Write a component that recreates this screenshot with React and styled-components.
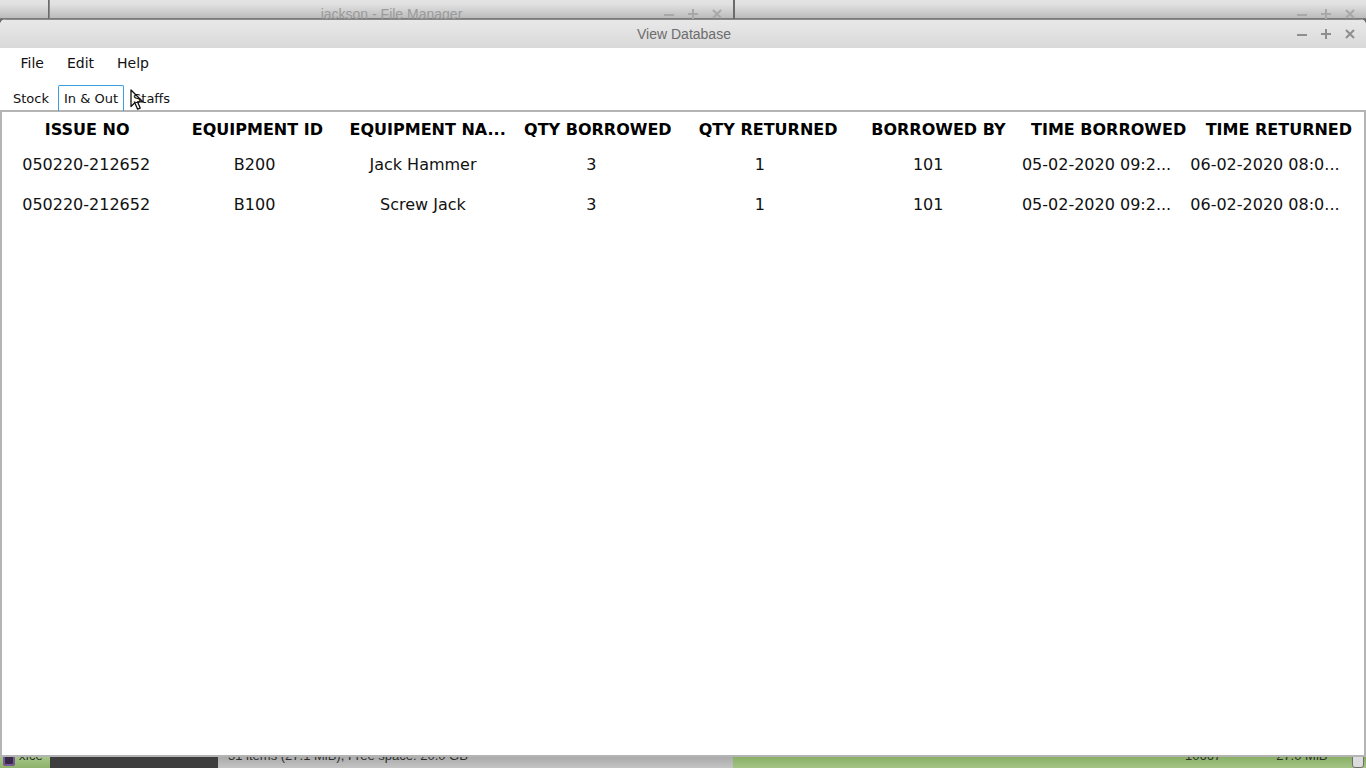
import React from "react";
import styled, { createGlobalStyle } from "styled-components";

const GlobalStyle = createGlobalStyle`
  html, body {
    margin: 0;
    padding: 0;
    overflow: hidden;
  }
  body {
    font-family: "DejaVu Sans", "Liberation Sans", sans-serif;
  }
`;

const columns = [
  "ISSUE NO",
  "EQUIPMENT ID",
  "EQUIPMENT NA...",
  "QTY BORROWED",
  "QTY RETURNED",
  "BORROWED BY",
  "TIME BORROWED",
  "TIME RETURNED",
];

const rows = [
  ["050220-212652", "B200", "Jack Hammer", "3", "1", "101", "05-02-2020 09:2...", "06-02-2020 08:0..."],
  ["050220-212652", "B100", "Screw Jack", "3", "1", "101", "05-02-2020 09:2...", "06-02-2020 08:0..."],
];

const WinButtons = ({ color }) => (
  <ButtonSet>
    <svg width="12" height="12" viewBox="0 0 12 12">
      <path d="M1 7h10" stroke={color} strokeWidth="2" />
    </svg>
    <svg width="12" height="12" viewBox="0 0 12 12">
      <path d="M1 6h10M6 1v10" stroke={color} strokeWidth="2" />
    </svg>
    <svg width="12" height="12" viewBox="0 0 12 12">
      <path d="M2 2l8 8M10 2l-8 8" stroke={color} strokeWidth="2" />
    </svg>
  </ButtonSet>
);

const App = () => {
  return (
    <>
      <GlobalStyle />
      <Desktop>
        <BackBar $left={-20} $width={68} />
        <BackBar $left={49} $width={684} $edge>
          <BackTitle>jackson - File Manager</BackTitle>
          <BackButtons>
            <WinButtons color="#a8a8a8" />
          </BackButtons>
        </BackBar>
        <BackBar $left={735} $width={631}>
          <BackButtons>
            <WinButtons color="#a8a8a8" />
          </BackButtons>
        </BackBar>

        <BottomStrip>
          <Segment $w={50} $bg="linear-gradient(#a6c889, #8cb26a)">
            <PanelIcon />
            <CutText>xfce</CutText>
          </Segment>
          <Segment $w={168} $bg="#3e3e3e" />
          <Segment $w={515} $bg="linear-gradient(#a8a8a8, #c4c4c4)">
            <CutText $pad={10}>31 items (27.1 MiB), Free space: 20.0 GB</CutText>
          </Segment>
          <Segment $grow $bg="linear-gradient(#86ad62, #a4c486)">
            <CutText $pad={452}>10667</CutText>
            <CutText $pad={55}>27.0 MiB</CutText>
            <CutText $pad={50}>0%</CutText>
            <ScrollNub />
          </Segment>
        </BottomStrip>

        <Window>
          <TitleBar>
            <Title>View Database</Title>
            <TitleButtons>
              <WinButtons color="#8e8e8e" />
            </TitleButtons>
          </TitleBar>

          <MenuBar>
            <MenuItem>File</MenuItem>
            <MenuItem>Edit</MenuItem>
            <MenuItem>Help</MenuItem>
          </MenuBar>

          <TabRow>
            <Tab>Stock</Tab>
            <Tab $active>In &amp; Out</Tab>
            <Tab>Staffs</Tab>
          </TabRow>

          <Content>
            <HeaderRow>
              {columns.map((c) => (
                <HeadCell key={c}>{c}</HeadCell>
              ))}
            </HeaderRow>
            {rows.map((row, index) => (
              <DataRow key={index}>
                {row.map((cell, i) => (
                  <Cell key={i}>{cell}</Cell>
                ))}
              </DataRow>
            ))}
          </Content>
        </Window>

        <Cursor width="14" height="22" viewBox="0 0 14 22">
          <path
            d="M1 1 L1 17.5 L4.8 13.8 L7.6 20.2 L10.2 19.1 L7.5 12.8 L12.8 12.8 Z"
            fill="#fff"
            stroke="#111"
            strokeWidth="1.3"
            strokeLinejoin="round"
          />
        </Cursor>
      </Desktop>
    </>
  );
};

const Desktop = styled.div`
  position: relative;
  width: 1366px;
  height: 768px;
  overflow: hidden;
  background: #6b6b6b;
`;

const BackBar = styled.div`
  position: absolute;
  top: -12px;
  left: ${(p) => p.$left}px;
  width: ${(p) => p.$width}px;
  height: 31px;
  border-radius: 8px 8px 0 0;
  background: linear-gradient(#ececec 0%, #e0e0e0 55%, #bcbcbc 100%);
  border-bottom: 1px solid #7c7c7c;
  box-sizing: border-box;
  ${(p) => p.$edge && "border-left: 1px solid #8a8a8a;"}
`;

const BackTitle = styled.div`
  position: absolute;
  left: 0;
  right: 0;
  top: 18px;
  text-align: center;
  font-family: "Liberation Sans", Arial, sans-serif;
  font-size: 14px;
  color: #9a9a9a;
  line-height: 16px;
`;

const BackButtons = styled.div`
  position: absolute;
  top: 20px;
  right: 10px;
`;

const ButtonSet = styled.div`
  display: flex;
  gap: 12px;
  align-items: center;
`;

const BottomStrip = styled.div`
  position: absolute;
  left: 0;
  right: 0;
  top: 756px;
  height: 12px;
  display: flex;
`;

const Segment = styled.div`
  display: flex;
  align-items: flex-start;
  overflow: hidden;
  height: 12px;
  background: ${(p) => p.$bg};
  ${(p) => (p.$grow ? "flex: 1;" : `width: ${p.$w}px;`)}
  position: relative;
`;

const CutText = styled.span`
  font-family: "Liberation Sans", Arial, sans-serif;
  font-size: 13px;
  line-height: 13px;
  color: #2e2e2e;
  margin-left: ${(p) => p.$pad || 4}px;
  margin-top: -7px;
  white-space: nowrap;
`;

const PanelIcon = styled.div`
  width: 12px;
  height: 12px;
  margin: -2px 0 0 3px;
  border-radius: 3px;
  background: #3a2a4a;
  box-shadow: inset 0 0 0 2px #7b5a9b;
  flex-shrink: 0;
`;

const ScrollNub = styled.div`
  position: absolute;
  right: 2px;
  top: -4px;
  width: 10px;
  height: 14px;
  border: 1px solid #6e6e6e;
  border-radius: 3px;
  background: #dcdcdc;
`;

const Window = styled.div`
  position: absolute;
  left: 0;
  top: 19px;
  width: 1366px;
  height: 738px;
  display: flex;
  flex-direction: column;
  background: #fff;
  border-radius: 6px 6px 0 0;
  overflow: hidden;
`;

const TitleBar = styled.div`
  position: relative;
  height: 29px;
  flex-shrink: 0;
  display: flex;
  align-items: center;
  justify-content: center;
  background: linear-gradient(#e8e8e8, #d9d9d9);
  border-top: 1px solid #8a8a8a;
  box-sizing: border-box;
`;

const Title = styled.div`
  font-family: "Liberation Sans", Arial, sans-serif;
  font-size: 14px;
  color: #6c6c6c;
  margin-left: 2px;
`;

const TitleButtons = styled.div`
  position: absolute;
  right: 10px;
  top: 8px;
`;

const MenuBar = styled.div`
  height: 32px;
  flex-shrink: 0;
  display: flex;
  align-items: center;
  padding-left: 9px;
`;

const MenuItem = styled.div`
  font-size: 14px;
  color: #111;
  padding: 0 11.5px;
  margin-top: -2px;
`;

const TabRow = styled.div`
  height: 32px;
  box-sizing: border-box;
  flex-shrink: 0;
  display: flex;
  align-items: flex-end;
  gap: 3px;
  padding-left: 7px;
  border-bottom: 2px solid #b4b4b4;
  position: relative;
  z-index: 1;
`;

const Tab = styled.div`
  height: 26px;
  box-sizing: border-box;
  display: flex;
  align-items: center;
  padding: 0 5px;
  font-size: 13px;
  color: #111;
  border: 1px solid ${(p) => (p.$active ? "#3d9fe0" : "transparent")};
  border-bottom: none;
  border-radius: 2px 2px 0 0;
  margin-bottom: -1px;
`;

const Content = styled.div`
  flex: 1;
  border: 2px solid #b4b4b4;
  border-top: none;
  overflow: hidden;
`;

const HeaderRow = styled.div`
  display: grid;
  grid-template-columns: repeat(8, 170.25px);
  height: 32px;
  padding-top: 2px;
  box-sizing: border-box;
  align-items: center;
`;

const HeadCell = styled.div`
  font-size: 16px;
  font-weight: bold;
  color: #000;
  text-align: center;
  white-space: nowrap;
  overflow: hidden;
`;

const DataRow = styled.div`
  display: grid;
  grid-template-columns: repeat(8, 168.4px);
  height: 40px;
  align-items: center;
`;

const Cell = styled.div`
  font-size: 16px;
  color: #111;
  text-align: center;
  white-space: nowrap;
  overflow: hidden;
`;

const Cursor = styled.svg`
  position: absolute;
  left: 130px;
  top: 89px;
`;

export default App;
